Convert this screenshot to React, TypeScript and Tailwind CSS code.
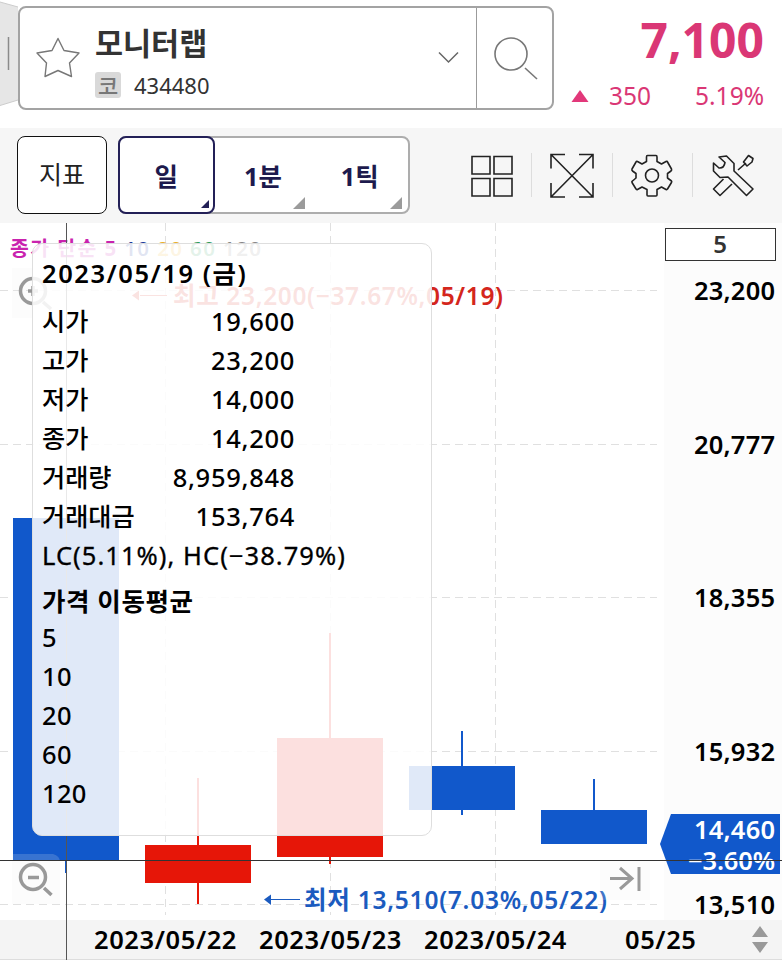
import clsx from 'clsx';

const GRID_Y = [290, 444, 597, 751, 904];
const GRID_X = [165, 330, 495];
const PRICES = ['23,200', '20,777', '18,355', '15,932', '13,510'];

const CANDLES = [
  { x: 66, top: 518, bottom: 860, high: 518, low: 873, color: '#1158cb' },
  { x: 198, top: 845, bottom: 883, high: 778, low: 904, color: '#e61608' },
  { x: 330, top: 738, bottom: 857, high: 633, low: 864, color: '#e61608' },
  { x: 462, top: 766, bottom: 810, high: 731, low: 815, color: '#1158cb' },
  { x: 594, top: 810, bottom: 844, high: 779, low: 844, color: '#1158cb' },
];

const QUOTES = [
  { label: '시가', value: '19,600' },
  { label: '고가', value: '23,200' },
  { label: '저가', value: '14,000' },
  { label: '종가', value: '14,200' },
  { label: '거래량', value: '8,959,848' },
  { label: '거래대금', value: '153,764' },
];

const PERIODS = ['일', '1분', '1틱'];
const AVERAGES = ['5', '10', '20', '60', '120'];
const DATES = ['2023/05/22', '2023/05/23', '2023/05/24', '05/25'];

const Header = () => (
  <header className="flex h-32 shrink-0 bg-white">
    <svg className="h-32 w-[18px] shrink-0" viewBox="0 0 18 128">
      <path d="M0 2 L18 7 V100 L0 105.500Z" fill="#e6e6e6" />
      <path d="M0 2 L18 7 M18 100 L0 105.500" stroke="#ccc" fill="none" />
      <path d="M8.500 37 V70" stroke="#8a8a8a" strokeWidth="1.500" />
    </svg>
    <div className="mt-1.5 flex h-[104px] w-[536px] rounded-lg border-2 border-[#a3a3a3]">
      <div className="flex w-[457px] items-center border-r border-[#9b9b9b]">
        <svg className="ml-4 h-11 w-11 shrink-0" viewBox="0 0 44 44" fill="none">
          <path
            d="M22 2.500 L28 14.500 L43 17 L33.500 27 L35.500 40.500 L22 34.500 L9 40.500 L10.500 27 L1 17 L16 14.500 Z"
            stroke="#777"
            strokeWidth="1.400"
            strokeLinejoin="round"
          />
        </svg>
        <div className="flex w-[340px] shrink-0 flex-col pt-2.5 pl-[15px]">
          <span className="h-11 text-[30.500px] leading-[40px] font-bold text-[#333]">모니터랩</span>
          <div className="flex h-9 items-center gap-[13px]">
            <span className="flex h-[26px] w-[26px] items-center justify-center rounded-[3px] bg-[#d9d9d9] text-[22px] leading-none font-medium text-[#777]">
              코
            </span>
            <span className="text-[22px] text-[#333]">434480</span>
          </div>
        </div>
        <svg className="ml-[17px] h-4 w-6 shrink-0" viewBox="0 0 24 16" fill="none">
          <path d="M2 2.500 L11.500 12 L21 2.500" stroke="#666" strokeWidth="1.500" />
        </svg>
      </div>
      <svg className="mt-[27px] ml-[15px] h-12 w-12" viewBox="0 0 48 48" fill="none">
        <circle cx="19" cy="19" r="16" stroke="#777" strokeWidth="1.600" />
        <path d="M33 33 L45 44" stroke="#777" strokeWidth="1.600" />
      </svg>
    </div>
    <div className="flex flex-1 flex-col pr-[18px] text-[#da3775]">
      <span className="mt-2 h-16 text-right text-[48px] leading-[64px] font-bold">7,100</span>
      <div className="flex h-12 items-center pl-[17px] text-[24.500px]">
        <svg className="h-3 w-[18px]" viewBox="0 0 18 12">
          <path d="M9 0 L17.500 12 H0.500 Z" fill="#e2387a" />
        </svg>
        <span className="ml-5">350</span>
        <span className="ml-auto">5.19%</span>
      </div>
    </div>
  </header>
);

const PeriodTab = ({ label, active }: { label: string; active: boolean }) => (
  <button
    className={clsx(
      'relative flex h-[78px] w-[98px] items-center justify-center pt-0.5 text-[25.500px] font-bold text-[#1d1a4d]',
      active && '-my-0.5 -ml-0.5 rounded-lg border-2 border-[#232057] bg-white',
    )}
  >
    {label}
    <svg
      className={clsx('absolute', active ? 'right-1 bottom-1 h-2 w-2' : 'right-1.5 bottom-[5px] h-3 w-3')}
      viewBox="0 0 10 10"
    >
      <path d="M10 0 V10 H0 Z" fill={active ? '#232057' : '#9b9b9b'} />
    </svg>
  </button>
);

const ToolbarIcons = () => (
  <div className="flex h-11 items-center">
    <svg className="h-11 w-11" viewBox="0 0 44 44" fill="none" stroke="#222" strokeWidth="1.600">
      <path d="M2 3.500 H20 V21 H2 Z M24 3.500 H42 V21 H24 Z M2 25.500 H20 V43 H2 Z M24 25.500 H42 V43 H24 Z" />
    </svg>
    <i className="ml-[17px] h-11 w-px bg-[#ddd]" />
    <svg className="ml-[18px] h-12 w-11" viewBox="0 0 44 48" fill="none" stroke="#222" strokeWidth="1.600">
      <path d="M1 17.500 V3.500 H15 M29 3.500 H43 V17.500 M1 32 V46 H15 M29 46 H43 V32 M1 3.500 L43 46 M43 3.500 L1 46" />
    </svg>
    <i className="ml-[18px] h-11 w-px bg-[#ddd]" />
    <svg
      className="ml-[17px] h-11 w-11"
      viewBox="0 -1 44 44"
      fill="none"
      stroke="#222"
      strokeWidth="1.600"
      strokeLinejoin="round"
    >
      <path d="M16.500 3 Q16.500 1.500 17.500 1.500 H26 Q27 1.500 27 3 V7.500 L31.500 10 L36 7.500 Q37 7 37.500 8 L41.500 15 Q42 16 41 17 L37.500 19.500 V24 L41.500 27 Q42 27.500 41.500 28.500 L37.500 35 Q37 36 36 35.500 L31.500 33 L27 35.500 V41 Q27 42 26 42 H18 Q17 42 17 41 V35.500 L12 33 L7.500 35.500 Q6.500 36 6 35 L2 28.500 Q1.500 27.500 2.500 27 L6 24 V19.500 L2.500 17 Q1.500 16 2 15 L6 8 Q6.500 7 7.500 7.500 L12 10 L16.500 7.500 Z" />
      <circle cx="22" cy="21.500" r="6.500" />
    </svg>
    <i className="ml-[18px] h-11 w-px bg-[#ddd]" />
    <svg
      className="ml-[19px] h-11 w-11"
      viewBox="0 -1 44 44"
      fill="none"
      stroke="#222"
      strokeWidth="1.600"
      strokeLinejoin="round"
    >
      <path d="M7 3 L14.500 2 L22 9.500 V17 L41 35 L34.500 41.500 L16 23 L8 23.500 L1.500 17 V9 L7 14 Q12 14.500 13 8.500 Z" />
      <path d="M11.500 25 L1.500 35 L8 41.500 L20 30 M26 16 L34 9 M31.500 8 L36.500 1.500 L41 4.500 L40 8 L35 12 Z" />
    </svg>
  </div>
);

const Toolbar = () => (
  <div className="flex h-[95px] shrink-0 bg-[#f6f6f6] pt-2 pl-[17px]">
    <button className="h-[78px] w-[90px] rounded-lg border-[1.5px] border-[#111] bg-white text-[25px] text-[#222]">
      지표
    </button>
    <div className="ml-[11px] flex h-[78px] w-[292px] items-center rounded-lg border-2 border-[#adadad] bg-white">
      {PERIODS.map((label, index) => (
        <PeriodTab key={label} label={label} active={index === 0} />
      ))}
    </div>
    <div className="ml-[60px] pt-[17px]">
      <ToolbarIcons />
    </div>
  </div>
);

const Chart = () => (
  <svg className="block h-[697px] w-[782px]" viewBox="0 223 782 697">
    <rect x="664" y="223" width="118" height="697" fill="#fcfcfc" />
    <g stroke="#e0e0e0" strokeDasharray="8 5">
      {GRID_Y.map((y) => (
        <path key={y} d={`M0 ${y + 0.5} H657`} />
      ))}
      {GRID_X.map((x) => (
        <path key={x} d={`M${x + 0.5} 223 V915`} />
      ))}
    </g>
    {CANDLES.map(({ x, top, bottom, high, low, color }) => (
      <g key={x} fill={color}>
        <rect x={x - 53} y={top} width="106" height={bottom - top} />
        <rect x={x - 1} y={high} width="2" height={low - high} />
      </g>
    ))}
    <text x="10" y="256" fontSize="20.500" fontWeight="600" textLength="251">
      <tspan fill="#c922ae" fontWeight="700">종가 단순 5 </tspan>
      <tspan fill="#1a3a9c">10 </tspan>
      <tspan fill="#eab02a">20 </tspan>
      <tspan fill="#2f9d5b">60 </tspan>
      <tspan fill="#888">120</tspan>
    </text>
    <path d="M140 295.500 H167" stroke="#d4261c" />
    <path d="M132 295.500 L139 290.500 V300.500 Z" fill="#d4261c" />
    <text x="173" y="305" fontSize="24.500" fontWeight="600" fill="#d4261c" textLength="330">
      최고 23,200(−37.67%,05/19)
    </text>
    <path d="M271 899.500 H300" stroke="#1b5bbf" />
    <path d="M264 899.500 L271 894.500 V905 Z" fill="#1b5bbf" />
    <text x="304" y="909" fontSize="24.500" fontWeight="600" fill="#1b5bbf" textLength="303">
      최저 13,510(7.03%,05/22)
    </text>

    <path
      d="M12 268 H60 V318 H12 Z M12 854 H53 Q60 856 60 862 V904 H12 Z M600 861 H650 V900 H600 Z"
      fill="#eee"
      fillOpacity="0.180"
    />
    <g fill="none" stroke="#999" strokeWidth="3.500">
      <circle cx="33" cy="291" r="12.500" />
      <path d="M28 291 H38 M33 286 V296 M43 302 L51 309" />
      <circle cx="33" cy="877" r="12.500" />
      <path d="M28 877.500 H39 M44 888 L51.500 895" />
      <path d="M610 878.500 H632 M620 868 L632 878.500 L620 889 M639 867 V891" strokeWidth="3" />
    </g>

    <rect x="665.5" y="228.500" width="110" height="32" fill="#fff" stroke="#333" />
    <text x="720" y="253" fontSize="24" fontWeight="600" fill="#333" textAnchor="middle">5</text>
    <path d="M671 814 H780 V874 H671 L660 844 Z" fill="#1158cb" />
    <g fontSize="25.500" fontWeight="600">
      {PRICES.map((price, index) => (
        <text key={price} x="694" y={GRID_Y[index] + 10} textLength="81">{price}</text>
      ))}
      <text x="694" y="839" fill="#fff" textLength="81">14,460</text>
      <text x="688" y="870" fill="#fff" textLength="87">−3.60%</text>
    </g>
  </svg>
);

const QuoteTooltip = () => (
  <div className="absolute top-5 left-8 h-[593px] w-[400px] rounded-[10px] border border-[#dedede] bg-white/87 pl-[9px] text-[25.500px] leading-[39px] font-medium text-black">
    <div className="mt-2.5 mb-[9px] font-semibold tracking-[1.550px]">2023/05/19 (금)</div>
    {QUOTES.map(({ label, value }) => (
      <div key={label} className="flex w-[253px] justify-between">
        <span className="text-[25.200px]">{label}</span>
        <span className="tracking-[0.7px]">{value}</span>
      </div>
    ))}
    <div className="font-normal tracking-[1.050px] [-webkit-text-stroke:0.3px_black]">LC(5.11%), HC(−38.79%)</div>
    <div className="mt-[7px] -mb-[3px] text-[25.500px] font-bold tracking-[0.6px]">가격 이동평균</div>
    {AVERAGES.map((days) => (
      <div key={days} className="tracking-[0.3px]">
        {days}
      </div>
    ))}
  </div>
);

const DateAxis = () => (
  <div className="flex h-10 items-center border-b border-[#ddd] bg-[#f4f4f4] pl-[94px] text-[25.500px] font-semibold tracking-[0.6px] text-black">
    {DATES.map((date) => (
      <span key={date} className="w-[165px] shrink-0 last-of-type:ml-9 last-of-type:w-[82px]">
        {date}
      </span>
    ))}
    <svg className="ml-[45px] h-7 w-4 shrink-0" viewBox="0 0 16 28">
      <path d="M8 0 L16 11 H0 Z M0 16 H16 L8 27 Z" fill="#999" />
    </svg>
  </div>
);

export default function App() {
  return (
    <main className="flex h-[960px] w-[782px] flex-col overflow-hidden bg-white font-['Noto_Sans','Noto_Sans_CJK_KR',sans-serif]">
      <Header />
      <Toolbar />
      <section className="relative">
        <Chart />
        <DateAxis />
        <div className="absolute top-0 left-[66px] h-full w-px bg-[#555]" />
        <div className="absolute top-[637px] left-0 h-px w-full bg-[#333]" />
        <QuoteTooltip />
      </section>
    </main>
  );
}
